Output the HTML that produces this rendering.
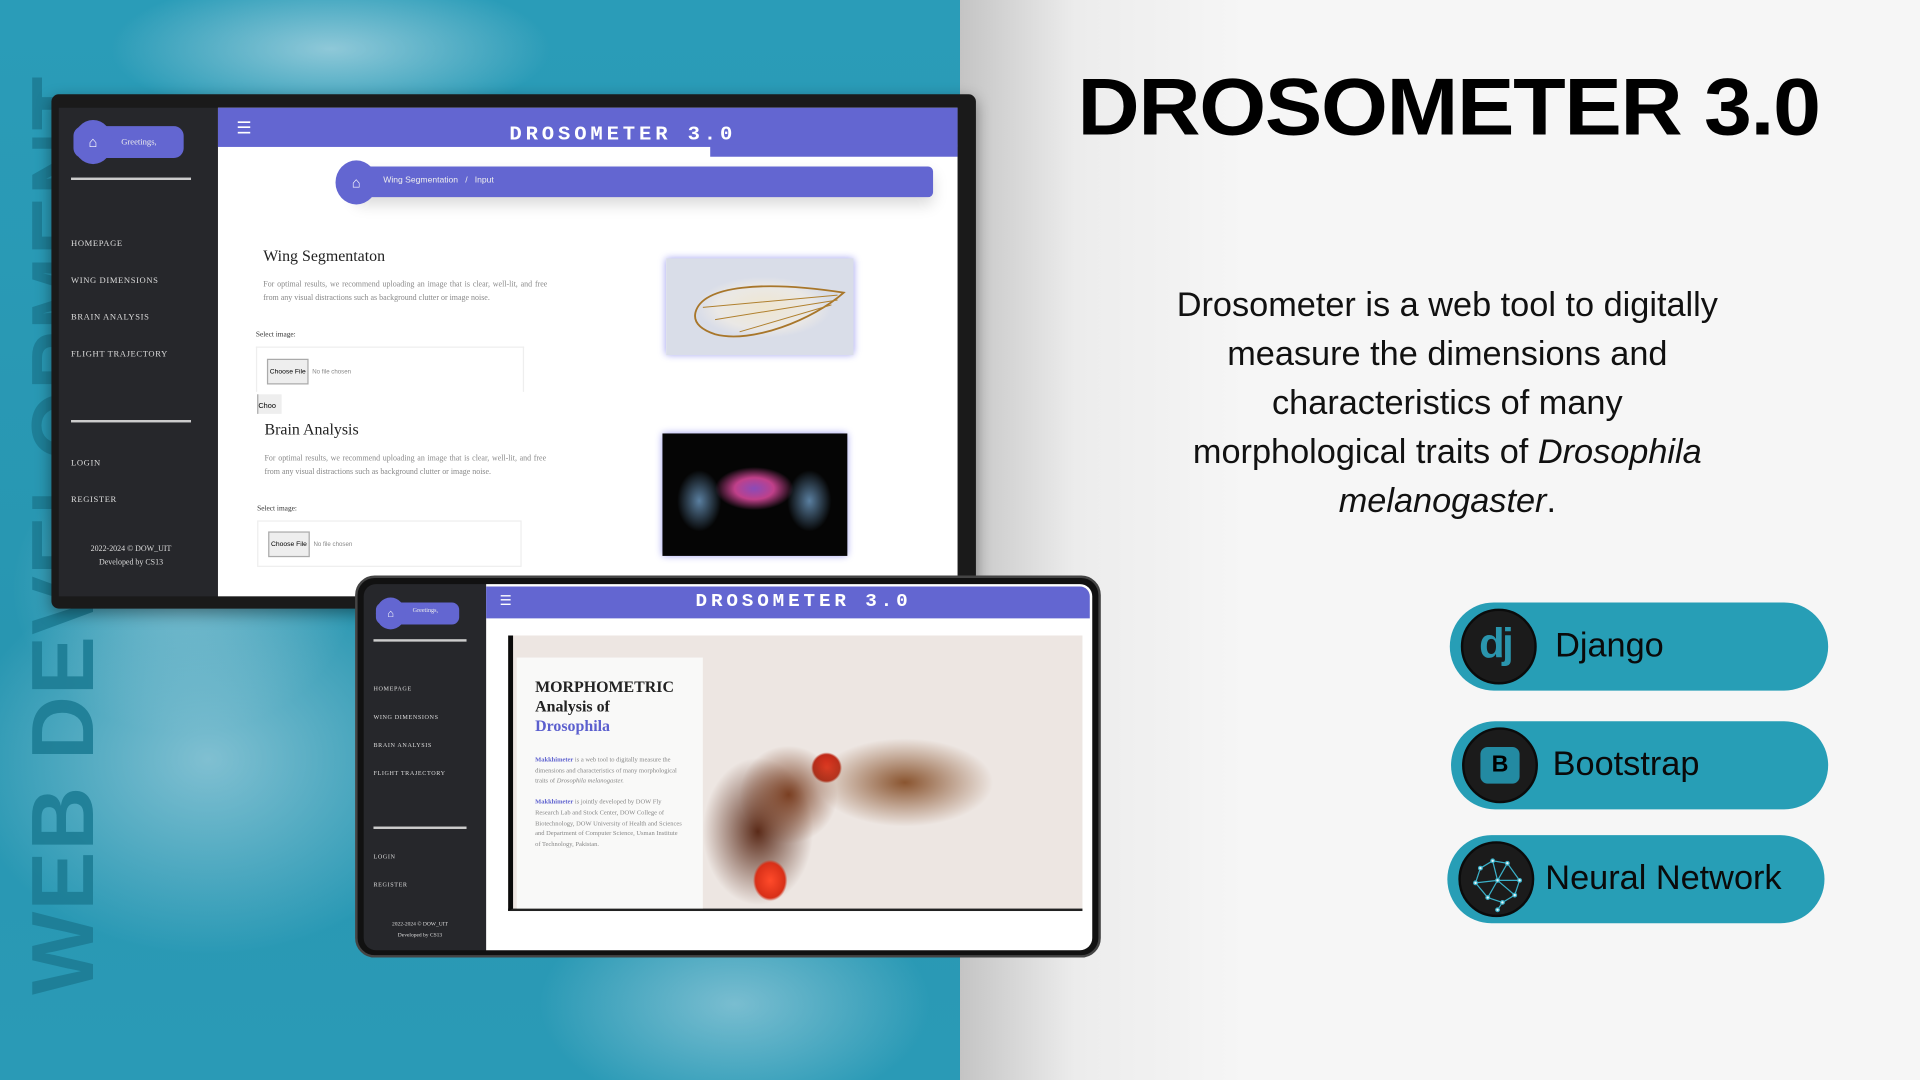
<!DOCTYPE html>
<html><head><meta charset="utf-8"><style>
*{margin:0;padding:0;box-sizing:border-box}
html,body{width:1920px;height:1080px;overflow:hidden;background:#f6f6f6}
#w{position:absolute;left:0;top:0;width:1568px;height:882px;transform:scale(1.22449);transform-origin:0 0;font-family:"Liberation Sans",sans-serif;overflow:hidden}
.a{position:absolute}
.sky{left:0;top:0;width:784px;height:882px;background:radial-gradient(ellipse 180px 60px at 270px 40px,rgba(210,230,238,.6),transparent),radial-gradient(ellipse 200px 160px at 170px 620px,rgba(200,225,235,.55),transparent),radial-gradient(ellipse 160px 90px at 600px 820px,rgba(200,225,235,.5),transparent),radial-gradient(ellipse 140px 120px at 150px 480px,rgba(200,225,235,.4),transparent),linear-gradient(180deg,#2a9cb8,#2896b1 60%,#2a9ab6)}
.right{left:784px;top:0;width:784px;height:882px;background:linear-gradient(90deg,#c4c4c4,#ececec 12%,#f6f6f6 30%)}
.vt{left:-398px;top:402px;width:900px;height:70px;transform:rotate(-90deg);font-weight:900;font-size:72px;color:#1d7d95;letter-spacing:1px;line-height:70px;white-space:nowrap;text-align:center;opacity:.9}
.side{background:#26272b;color:#ddd;font-family:"Liberation Serif",serif}
.side .it{font-size:7px;letter-spacing:.5px;position:absolute;left:10px}
.pur{background:#6366d1}
.logo{font-family:"Liberation Mono",monospace;font-weight:bold;color:#fff;letter-spacing:3px;transform:scaleX(1.05);transform-origin:0 0;white-space:nowrap}
.ser{font-family:"Liberation Serif",serif}
.pill{position:absolute;left:1184px;width:309px;height:72px;border-radius:36px;background:#279eb6}
.pill .c{position:absolute;left:9px;top:5px;width:62px;height:62px;border-radius:50%;background:#1b1b1b;border:2px solid #0b0b0b}
.pill .t{position:absolute;left:86px;top:19px;font-size:28px;color:#0a0a0a}
</style></head><body><div id="w">
<div class="a sky"></div>
<div class="a right"></div>
<div class="a vt">WEB DEVELOPMENT</div>

<!-- monitor -->
<div class="a" style="left:42px;top:77px;width:755px;height:420px;background:#1a1a1a;border-radius:6px;box-shadow:0 4px 12px rgba(0,0,0,.4)"></div>
<div class="a side" style="left:48px;top:88px;width:130px;height:399px">
 <div class="a pur" style="left:12px;top:15px;width:90px;height:26px;border-radius:8px"></div>
 <div class="a pur" style="left:12px;top:10px;width:32px;height:36px;border-radius:50%;color:#fff;font-size:12px;text-align:center;line-height:36px">⌂</div>
 <div class="a" style="left:51px;top:24px;font-size:7px;color:#eee">Greetings,</div>
 <div class="a" style="left:10px;top:57px;width:98px;height:2px;background:#ccc"></div>
 <div class="it" style="top:107px">HOMEPAGE</div>
 <div class="it" style="top:137px">WING DIMENSIONS</div>
 <div class="it" style="top:167px">BRAIN ANALYSIS</div>
 <div class="it" style="top:197px">FLIGHT TRAJECTORY</div>
 <div class="a" style="left:10px;top:255px;width:98px;height:2px;background:#ccc"></div>
 <div class="it" style="top:286px">LOGIN</div>
 <div class="it" style="top:316px">REGISTER</div>
 <div class="a" style="left:0;width:118px;top:355px;font-size:6.5px;text-align:center;line-height:11px">2022-2024 © DOW_UIT<br>Developed by CS13</div>
</div>
<div class="a" style="left:178px;top:88px;width:604px;height:399px;background:#fff"></div>
<div class="a pur" style="left:178px;top:88px;width:604px;height:32px"></div>
<div class="a pur" style="left:580px;top:118px;width:202px;height:10px"></div>
<div class="a" style="left:193px;top:96px;color:#fff;font-size:14px">☰</div>
<div class="a logo" style="left:416px;top:101px;font-size:16px">DROSOMETER 3.0</div>
<div class="a pur" style="left:290px;top:136px;width:472px;height:25px;border-radius:4px;box-shadow:0 6px 12px rgba(0,0,0,.15)"></div>
<div class="a pur" style="left:274px;top:131px;width:34px;height:36px;border-radius:50%;color:#fff;text-align:center;line-height:36px;font-size:12px">⌂</div>
<div class="a" style="left:313px;top:144px;font-size:7px;color:#eee" >Wing Segmentation &nbsp;&nbsp;/&nbsp;&nbsp; Input</div>
<div class="a ser" style="left:215px;top:201px;font-size:13px;color:#222">Wing Segmentaton</div>
<div class="a ser" style="left:215px;top:228px;width:232px;font-size:6.5px;color:#888;line-height:10.5px;text-align:justify">For optimal results, we recommend uploading an image that is clear, well-lit, and free from any visual distractions such as background clutter or image noise.</div>
<div class="a ser" style="left:209px;top:271px;font-size:6px;color:#333">Select image:</div>
<div class="a" style="left:209px;top:283px;width:219px;height:37px;border:1px solid #eee;border-bottom:none"></div>
<div class="a" style="left:218px;top:293px;width:34px;height:21px;background:#eee;border:1px solid #aaa;font-size:5.5px;line-height:20px;text-align:center">Choose File</div>
<div class="a" style="left:255px;top:301px;font-size:5px;color:#888">No file chosen</div>
<div class="a" style="left:210px;top:322px;width:20px;height:16px;background:#eee;border-left:1px solid #aaa;font-size:6px;padding-top:7px">Choo</div>
<div class="a" style="left:544px;top:211px;width:153px;height:79px;background:radial-gradient(ellipse 55px 25px at 80px 40px,#efe6d0,#eae8e6 70%,#d9dde8);box-shadow:0 0 6px #9a9af0">
 <svg width="153" height="79"><path d="M24 44 C30 22 80 18 145 28 C120 50 70 70 40 62 C28 58 22 52 24 44Z" fill="none" stroke="#a8762a" stroke-width="1.5"/><path d="M30 40 L140 30 M40 50 L140 34 M60 60 L135 38" stroke="#b0802e" stroke-width=".8"/></svg>
</div>
<div class="a ser" style="left:216px;top:343px;font-size:13px;color:#222">Brain Analysis</div>
<div class="a ser" style="left:216px;top:370px;width:230px;font-size:6.5px;color:#888;line-height:10.5px;text-align:justify">For optimal results, we recommend uploading an image that is clear, well-lit, and free from any visual distractions such as background clutter or image noise.</div>
<div class="a ser" style="left:210px;top:413px;font-size:6px;color:#333">Select image:</div>
<div class="a" style="left:210px;top:425px;width:216px;height:38px;border:1px solid #eee"></div>
<div class="a" style="left:219px;top:434px;width:34px;height:21px;background:#eee;border:1px solid #aaa;font-size:5.5px;line-height:20px;text-align:center">Choose File</div>
<div class="a" style="left:256px;top:442px;font-size:5px;color:#888">No file chosen</div>
<div class="a" style="left:541px;top:354px;width:151px;height:100px;background:radial-gradient(ellipse 18px 25px at 30px 55px,#5a7fa0,transparent),radial-gradient(ellipse 18px 25px at 120px 55px,#5a7fa0,transparent),radial-gradient(ellipse 40px 22px at 75px 45px,#8a4bb8,#c0408a 40%,transparent 80%),#050505;box-shadow:0 0 6px #9a9af0"></div>

<!-- tablet -->
<div class="a" style="left:290px;top:470px;width:609px;height:312px;background:#111;border-radius:16px;border:2px solid #444"></div>
<div class="a side" style="left:297px;top:477px;width:100px;height:299px;border-radius:10px 0 0 10px">
 <div class="a pur" style="left:10px;top:15px;width:68px;height:18px;border-radius:6px"></div>
 <div class="a pur" style="left:10px;top:11px;width:24px;height:26px;border-radius:50%;color:#fff;font-size:9px;text-align:center;line-height:26px">⌂</div>
 <div class="a" style="left:40px;top:20px;font-size:5px;color:#eee">Greetings,</div>
 <div class="a" style="left:8px;top:45px;width:76px;height:1.5px;background:#ccc"></div>
 <div class="it" style="left:8px;top:84px;font-size:5px">HOMEPAGE</div>
 <div class="it" style="left:8px;top:107px;font-size:5px">WING DIMENSIONS</div>
 <div class="it" style="left:8px;top:130px;font-size:5px">BRAIN ANALYSIS</div>
 <div class="it" style="left:8px;top:153px;font-size:5px">FLIGHT TRAJECTORY</div>
 <div class="a" style="left:8px;top:198px;width:76px;height:1.5px;background:#ccc"></div>
 <div class="it" style="left:8px;top:221px;font-size:5px">LOGIN</div>
 <div class="it" style="left:8px;top:244px;font-size:5px">REGISTER</div>
 <div class="a" style="left:0;width:92px;top:273px;font-size:4.5px;text-align:center;line-height:9px">2022-2024 © DOW_UIT<br>Developed by CS13</div>
</div>
<div class="a" style="left:397px;top:477px;width:495px;height:299px;background:#fff;border-radius:0 10px 10px 0"></div>
<div class="a pur" style="left:397px;top:479px;width:493px;height:26px;border-radius:0 8px 0 0"></div>
<div class="a" style="left:408px;top:484px;color:#fff;font-size:11px">☰</div>
<div class="a logo" style="left:568px;top:483px;font-size:15px">DROSOMETER 3.0</div>
<div class="a" style="left:415px;top:519px;width:469px;height:225px;background:radial-gradient(ellipse 40px 40px at 225px 130px,#7a3f22,transparent),radial-gradient(ellipse 90px 45px at 320px 120px,#8a5530,transparent 80%),radial-gradient(ellipse 18px 18px at 256px 108px,#e23a22,#c02a18 60%,transparent 70%),radial-gradient(ellipse 20px 24px at 210px 200px,#ff4a2a,#d83018 60%,transparent 70%),radial-gradient(ellipse 45px 60px at 200px 160px,#5a2a18,transparent),#ede6e2;border-left:4px solid #0a0a0a;border-bottom:2px solid #222"></div>
<div class="a" style="left:422px;top:537px;width:152px;height:205px;background:rgba(250,250,250,.93)"></div>
<div class="a ser" style="left:437px;top:553px;font-size:13px;font-weight:bold;color:#222;line-height:16px">MORPHOMETRIC<br>Analysis of<br><span style="color:#5b5fce">Drosophila</span></div>
<div class="a ser" style="left:437px;top:617px;width:122px;font-size:5.3px;color:#888;line-height:8.6px"><b style="color:#5b5fce">Makkhimeter</b> is a web tool to digitally measure the dimensions and characteristics of many morphological traits of <i>Drosophila melanogaster.</i><br><br><b style="color:#5b5fce">Makkhimeter</b> is jointly developed by DOW Fly Research Lab and Stock Center, DOW College of Biotechnology, DOW University of Health and Sciences and Department of Computer Science, Usman Institute of Technology, Pakistan.</div>

<!-- right side -->
<div class="a" style="left:880px;top:52px;font-size:66px;font-weight:900;color:#000;letter-spacing:-1px;transform:scaleX(1.065);transform-origin:0 0;white-space:nowrap;line-height:70px">DROSOMETER 3.0</div>
<div class="a" style="left:882px;top:229px;width:600px;text-align:center;font-size:28px;line-height:40px;color:#111;white-space:nowrap">Drosometer is a web tool to digitally<br>measure the dimensions and<br>characteristics of many<br>morphological traits of <i>Drosophila</i><br><i>melanogaster</i>.</div>

<div class="pill" style="top:492px"><div class="c"><div style="position:absolute;left:13px;top:8px;font-size:34px;font-weight:bold;color:#2a95ad;letter-spacing:-2px">dj</div></div><div class="t">Django</div></div>
<div class="pill" style="top:589px;left:1185px;width:308px"><div class="c"><div style="position:absolute;left:13px;top:14px;width:32px;height:30px;border-radius:6px;background:#238aa2;font-weight:bold;font-size:19px;text-align:center;line-height:30px;color:#000">B</div></div><div class="t" style="left:83px">Bootstrap</div></div>
<div class="pill" style="top:682px;left:1182px;width:308px"><div class="c"><svg width="58" height="58" style="position:absolute;left:0;top:0"><g stroke="#3ab0c8" stroke-width="1" fill="#e6f6fa"><path d="M16 20 L26 14 L38 16 L48 30 L44 42 L34 48 L30 54 M16 20 L12 32 L22 44 L34 48 M26 14 L30 30 L22 44 M30 30 L44 42 M38 16 L30 30 M12 32 L30 30 L48 30" fill="none"/><circle cx="16" cy="20" r="1.5"/><circle cx="26" cy="14" r="1.5"/><circle cx="38" cy="16" r="1.5"/><circle cx="48" cy="30" r="1.5"/><circle cx="44" cy="42" r="1.5"/><circle cx="34" cy="48" r="1.5"/><circle cx="30" cy="54" r="1.5"/><circle cx="12" cy="32" r="1.5"/><circle cx="22" cy="44" r="1.5"/><circle cx="30" cy="30" r="1.5"/></g></svg></div><div class="t" style="left:80px">Neural Network</div></div>
</div></body></html>
